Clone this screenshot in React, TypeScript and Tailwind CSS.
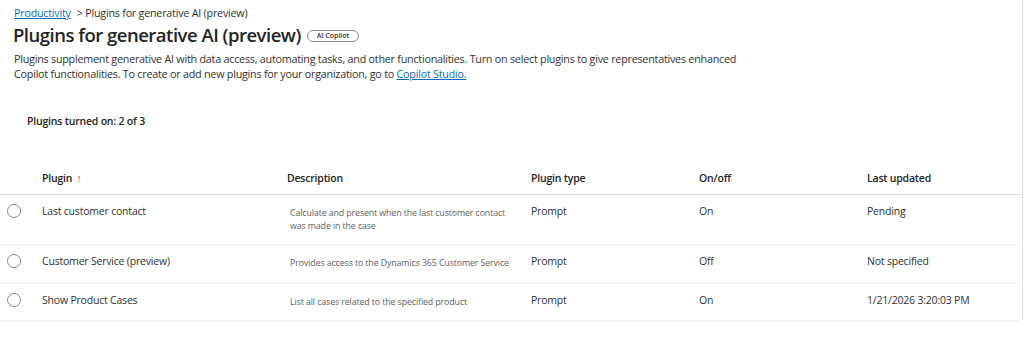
import React from "react";

const rows = [
  { name: "Last customer contact", desc: "Calculate and present when the last customer contact was made in the case", type: "Prompt", on: "On", updated: "Pending", h: "h-[50px]" },
  { name: "Customer Service (preview)", desc: "Provides access to the Dynamics 365 Customer Service", type: "Prompt", on: "Off", updated: "Not specified", h: "h-[39px]" },
  { name: "Show Product Cases", desc: "List all cases related to the specified product", type: "Prompt", on: "On", updated: "1/21/2026 3:20:03 PM", h: "h-[37px]" },
];

export default function App() {
  return (
    <div className="w-[1024px] h-[337px] bg-white text-[#323130] flex overflow-hidden" style={{ fontFamily: '"Open Sans", "Noto Sans", sans-serif' }}>
      <div className="flex-1 flex flex-col">
        <div className="pl-[14px] pt-[5px] text-[10.7px] leading-[16px] tracking-[-0.2px] flex items-center">
          <span className="text-[#0f6cbd] underline">Productivity</span>
          <span className="ml-[6px] text-[#323130]">&gt; Plugins for generative AI (preview)</span>
        </div>
        <div className="pl-[13px] mt-[2px] flex items-center gap-[6px]">
          <h1 className="text-[18.5px] leading-[24px] font-semibold tracking-[-0.5px] text-[#242424]">Plugins for generative AI (preview)</h1>
          <span className="mt-[1px] h-[12px] px-[9px] rounded-full border border-[#8a8886] text-[7px] leading-[10px] font-semibold flex items-center">AI Copilot</span>
        </div>
        <p className="pl-[14px] mt-[5px] w-[745px] text-[10.8px] leading-[14.5px] tracking-[-0.25px] text-[#323130]">
          Plugins supplement generative AI with data access, automating tasks, and other functionalities. Turn on select plugins to give representatives enhanced Copilot functionalities. To create or add new plugins for your organization, go to <span className="text-[#0f6cbd] underline">Copilot Studio.</span>
        </p>
        <div className="pl-[27px] mt-[33px] text-[10.5px] leading-[14px] font-semibold tracking-[-0.2px] text-[#242424]">Plugins turned on: 2 of 3</div>
        <div className="mt-[35px] flex flex-col">
          <div className="h-[32px] flex items-center border-b border-[#e1dfdd] text-[10.5px] font-semibold tracking-[-0.2px] text-[#242424]">
            <div className="w-[287px] pl-[42px] flex items-center">Plugin <span className="ml-[4px] font-normal text-[11px] text-[#605e5c]">↑</span></div>
            <div className="w-[244px]">Description</div>
            <div className="w-[168px]">Plugin type</div>
            <div className="w-[168px]">On/off</div>
            <div className="flex-1">Last updated</div>
          </div>
          {rows.map((r) => (
            <div key={r.name} className={`${r.h} flex items-start border-b border-[#f0f0f0] text-[10.5px] tracking-[-0.2px] text-[#323130] mr-[3px]`}>
              <div className="w-[287px] flex items-center pt-[9px]">
                <span className="ml-[7px] w-[14px] h-[14px] rounded-full border border-[#8a8886]"></span>
                <span className="ml-[21px] leading-[14px]">{r.name}</span>
              </div>
              <div className="w-[244px] pl-[3px] pr-[14px] pt-[12px] text-[8.8px] leading-[13px] tracking-[-0.1px] text-[#616161]">{r.desc}</div>
              <div className="w-[168px] pt-[9px] leading-[14px]">{r.type}</div>
              <div className="w-[168px] pt-[9px] leading-[14px]">{r.on}</div>
              <div className="flex-1 pt-[9px] leading-[14px]">{r.updated}</div>
            </div>
          ))}
        </div>
      </div>
      <div className="w-[1px] h-[320px] bg-[#e1dfdd] mr-[1px]"></div>
    </div>
  );
}
